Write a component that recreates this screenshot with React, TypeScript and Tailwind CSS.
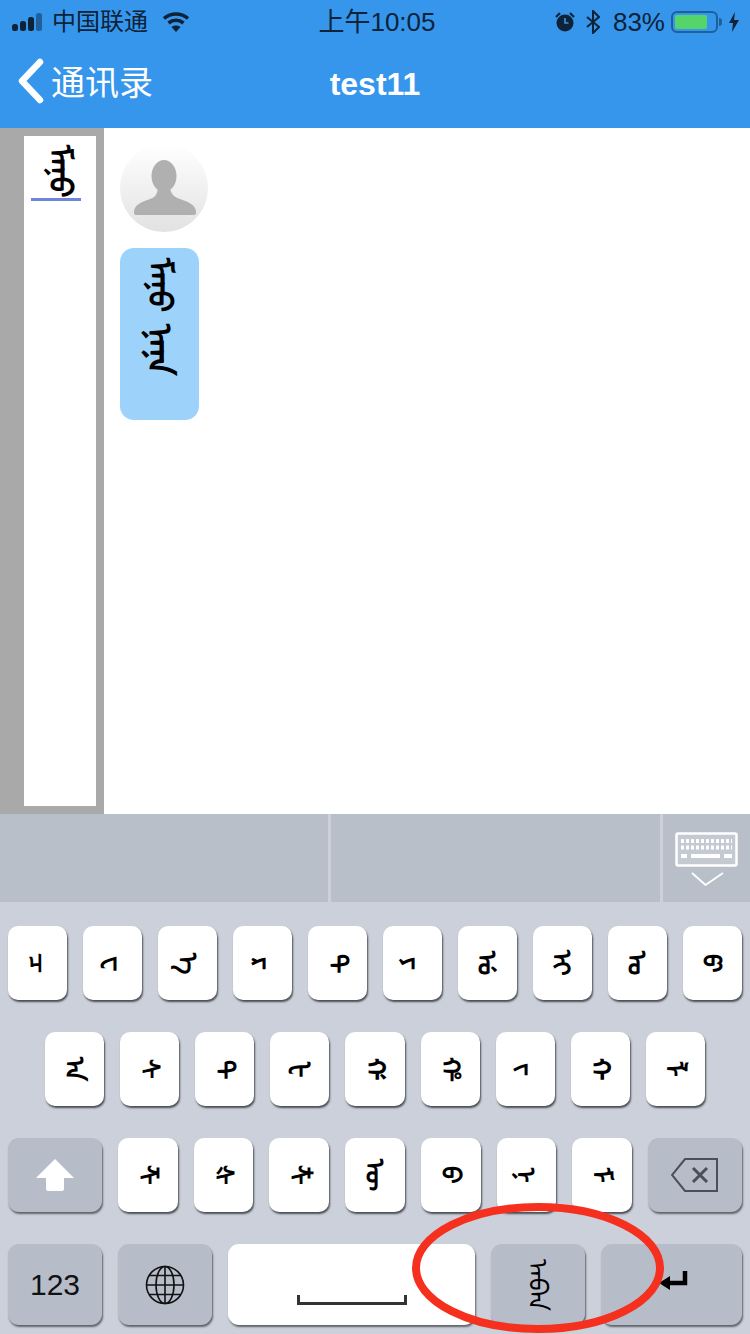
import { ReactNode } from 'react';

const ROW_1 = ['ᠴ', 'ᠸ', 'ᠡ', 'ᠷ', 'ᠲ', 'ᠶ', 'ᡠ', 'ᠢ', 'ᠣ', 'ᡦ'];
const ROW_2 = ['ᠠ', 'ᠰ', 'ᠲ', 'ᡫ', 'ᡤ', 'ᡥ', 'ᠵ', 'ᠬ', 'ᠯ'];
const ROW_3 = ['ᡯ', 'ᡧ', 'ᡮ', 'ᠥ', 'ᠪ', 'ᠨ', 'ᠮ'];

const mongol = "font-['DejaVu_Sans',sans-serif] [writing-mode:vertical-lr] text-black whitespace-nowrap";

function LetterKey({ letter }: { letter: string }) {
  return (
    <div className="flex flex-1 h-[74px] items-center justify-center rounded-[10px] bg-white shadow-[1px_2px_2px_#4a4d54]">
      <span className={`${mongol} text-[26px] font-bold leading-none`}>{letter}</span>
    </div>
  );
}

function FnKey({ className, children }: { className: string; children: ReactNode }) {
  return (
    <div className={`flex items-center justify-center rounded-[11px] bg-[#b7bcc9] shadow-[1px_2px_2px_#5f626a] ${className}`}>
      {children}
    </div>
  );
}

function StatusBar() {
  return (
    <div className="flex h-10 items-center justify-between pl-3 pr-[10px] pt-1 text-[26px] leading-none text-[#0e2238] font-['Liberation_Sans','Noto_Sans_CJK_SC',sans-serif]">
      <div className="flex w-[230px] items-center gap-[6px]">
        <svg width="34" height="20" viewBox="0 0 34 20">
          <rect x="0" y="12" width="6" height="7" rx="2.5" fill="#0e2238" />
          <rect x="8" y="9" width="6" height="10" rx="2.5" fill="#0e2238" />
          <rect x="16" y="5" width="6" height="14" rx="2.5" fill="#0e2238" />
          <rect x="24" y="1" width="6" height="18" rx="2.5" fill="#1f5f9c" />
        </svg>
        <span className="text-[24px]">中国联通</span>
        <svg className="ml-2" width="28" height="22" viewBox="0 0 28 22" fill="none" stroke="#0e2238" strokeWidth="3.6">
          <path d="M2 7.5C9 1.5 19 1.5 26 7.5" />
          <path d="M6.5 12C11 8.5 17 8.5 21.5 12" />
          <path d="M14 21l-4.5-5c2.5-2 6.5-2 9 0z" fill="#0e2238" stroke="none" />
        </svg>
      </div>
      <span className="ml-[2px]">上午10:05</span>
      <div className="flex w-[230px] items-center justify-end">
        <svg width="22" height="22" viewBox="0 0 22 22">
          <circle cx="11" cy="12" r="8.5" fill="#0e2238" />
          <path d="M11 7v5h3.5" stroke="#3596ec" strokeWidth="1.6" fill="none" />
          <path d="M2 6l4-4M20 6l-4-4" stroke="#0e2238" strokeWidth="2.2" />
        </svg>
        <svg className="ml-[10px]" width="14" height="24" viewBox="0 0 14 24" fill="none" stroke="#0e2238" strokeWidth="2">
          <path d="M1 7l12 10-6 6V1l6 6L1 17" />
        </svg>
        <span className="ml-[13px]">83%</span>
        <div className="ml-[6px] h-[22px] w-[47px] rounded-[6px] border-2 border-[#1f5f9c] p-[2px]">
          <div className="h-full w-[83%] rounded-[2px] bg-[#55d46a]" />
        </div>
        <div className="ml-[1px] h-[8px] w-[3px] rounded-r-sm bg-[#1f5f9c]" />
        <svg className="ml-[6px]" width="12" height="22" viewBox="0 0 12 22">
          <path d="M7 1L1 12h4l-1 9 7-12H6z" fill="#0e2238" />
        </svg>
      </div>
    </div>
  );
}

export default function App() {
  return (
    <div className="relative flex h-[1334px] w-[750px] flex-col overflow-hidden bg-white">
      {/* Header */}
      <div className="h-[128px] shrink-0 bg-[#3596ec]">
        <StatusBar />
        <div className="relative flex h-[88px] items-center justify-center text-white">
          <div className="absolute left-[17px] top-[18px] flex items-center gap-[6px]">
            <svg width="28" height="46" viewBox="0 0 28 46" fill="none" stroke="white" strokeWidth="6.5" strokeLinecap="round" strokeLinejoin="round">
              <path d="M23 4L5 23l18 19" />
            </svg>
            <span className="text-[34px] leading-none font-['Noto_Sans_CJK_SC',sans-serif]">通讯录</span>
          </div>
          <span className="text-[32px] font-bold font-['Liberation_Sans',sans-serif]">test11</span>
        </div>
      </div>

      {/* Chat */}
      <div className="flex h-[686px] shrink-0">
        <div className="h-full w-[104px] shrink-0 bg-[#a9a9a9] pb-2 pl-6 pr-2 pt-2">
          <div className="flex h-full flex-col items-center bg-white">
            <div className="mr-2 flex h-[65px] w-[50px] items-end justify-center border-b-[3px] border-[#6f86d6]">
              <span className={`${mongol} ml-2 text-[31px] font-bold leading-none`}>ᠮᠠᠨᠤ</span>
            </div>
          </div>
        </div>
        <div className="flex flex-col items-start gap-4 pl-4 pt-4">
          <div className="h-[88px] w-[88px] overflow-hidden rounded-full bg-gradient-to-b from-white to-[#e2e2e2]">
            <svg width="88" height="88" viewBox="0 0 88 88">
              <ellipse cx="44" cy="32" rx="12.5" ry="16" fill="#b0b0b0" />
              <path d="M38 44h12c1 6 4 9 10 11 9 3 15 6 16 12v2c0 1-1 2-2 2H16c-1 0-2-1-2-2v-2c1-6 7-9 16-12 6-2 7-5 8-11z" fill="#b0b0b0" />
            </svg>
          </div>
          <div className="flex h-[172px] w-[79px] flex-col items-center gap-3 rounded-[14px] bg-[#9dd3fb] pt-[10px]">
            <span className={`${mongol} text-[32px] font-bold leading-none`}>ᠮᠠᠨᠤ</span>
            <span className={`${mongol} text-[34px] font-bold leading-none`}>ᠨᠠᠨᠠ</span>
          </div>
        </div>
      </div>

      {/* Candidate bar */}
      <div className="flex h-[88px] shrink-0 gap-[3px] bg-[#cbd0da]">
        <div className="w-[328px] bg-[#b9bfc8]" />
        <div className="w-[329px] bg-[#b9bfc8]" />
        <div className="flex flex-1 flex-col items-center bg-[#b9bfc8] pt-[18px]">
          <svg width="64" height="54" viewBox="0 0 64 54" fill="none">
            <rect x="1.5" y="1.5" width="60" height="32" rx="1.5" stroke="white" strokeWidth="2.5" fill="#c5cad2" />
            <path d="M6 9h51M6 15.5h51" stroke="white" strokeWidth="4" strokeDasharray="3 2" />
            <path d="M6 24h6M16 24h29M49 24h8" stroke="white" strokeWidth="4" />
            <path d="M17 41l13.5 12L48 41" stroke="white" strokeWidth="1.8" />
          </svg>
        </div>
      </div>

      {/* Keyboard */}
      <div className="flex flex-1 flex-col bg-[#cbd0da] pt-6">
        <div className="flex gap-[15.5px] px-2">
          {ROW_1.map((l, i) => (
            <LetterKey key={i} letter={l} />
          ))}
        </div>
        <div className="mt-8 flex gap-4 px-[45px]">
          {ROW_2.map((l, i) => (
            <LetterKey key={i} letter={l} />
          ))}
        </div>
        <div className="mt-8 flex gap-4 px-2">
          <FnKey className="h-[74px] w-[94px] shrink-0">
            <svg width="40" height="34" viewBox="0 0 40 34">
              <path d="M20 1L39 20H29v11c0 1-1 2-2 2H13c-1 0-2-1-2-2V20H1z" fill="white" />
            </svg>
          </FnKey>
          {ROW_3.map((l, i) => (
            <LetterKey key={i} letter={l} />
          ))}
          <FnKey className="h-[74px] w-[94px] shrink-0">
            <svg width="48" height="36" viewBox="0 0 48 36" fill="none" stroke="#4c4f57" strokeWidth="2">
              <path d="M14 2h32v32H14L1 18z" />
              <path d="M22 11l14 14M36 11L22 25" strokeWidth="3" />
            </svg>
          </FnKey>
        </div>
        <div className="mt-8 flex h-[81px] gap-4 px-2">
          <FnKey className="w-[94px]">
            <span className="text-[30px] text-[#111] font-['Liberation_Sans',sans-serif]">123</span>
          </FnKey>
          <FnKey className="w-[94px]">
            <svg width="40" height="40" viewBox="0 0 40 40" fill="none" stroke="#111" strokeWidth="1.6">
              <circle cx="20" cy="20" r="18.5" />
              <ellipse cx="20" cy="20" rx="9" ry="18.5" />
              <path d="M20 1.5v37M1.5 20h37M4.5 10.5h31M4.5 29.5h31" />
            </svg>
          </FnKey>
          <div className="flex w-[247px] items-end justify-center rounded-[11px] bg-white pb-[20px] shadow-[1px_2px_2px_#5f626a]">
            <div className="h-[10px] w-[110px] border-x-[3px] border-b-[3px] border-[#333]" />
          </div>
          <FnKey className="w-[94px]">
            <span className={`${mongol} text-[26px] leading-none`}>ᠠᠪᠠᠨ</span>
          </FnKey>
          <FnKey className="flex-1">
            <svg className="ml-[4px] mt-[-4px]" width="30" height="26" viewBox="0 0 30 26" fill="none">
              <path d="M26 1v12H8" stroke="#000" strokeWidth="4.5" />
              <path d="M0 13l11-7v14z" fill="#000" />
            </svg>
          </FnKey>
        </div>
      </div>

      {/* Red annotation drawn over the screenshot */}
      <svg className="absolute left-[408px] top-[1200px]" width="262" height="134" viewBox="0 0 262 134" fill="none">
        <ellipse cx="130" cy="68" rx="122" ry="61" stroke="#f5301f" strokeWidth="8" />
      </svg>
    </div>
  );
}
